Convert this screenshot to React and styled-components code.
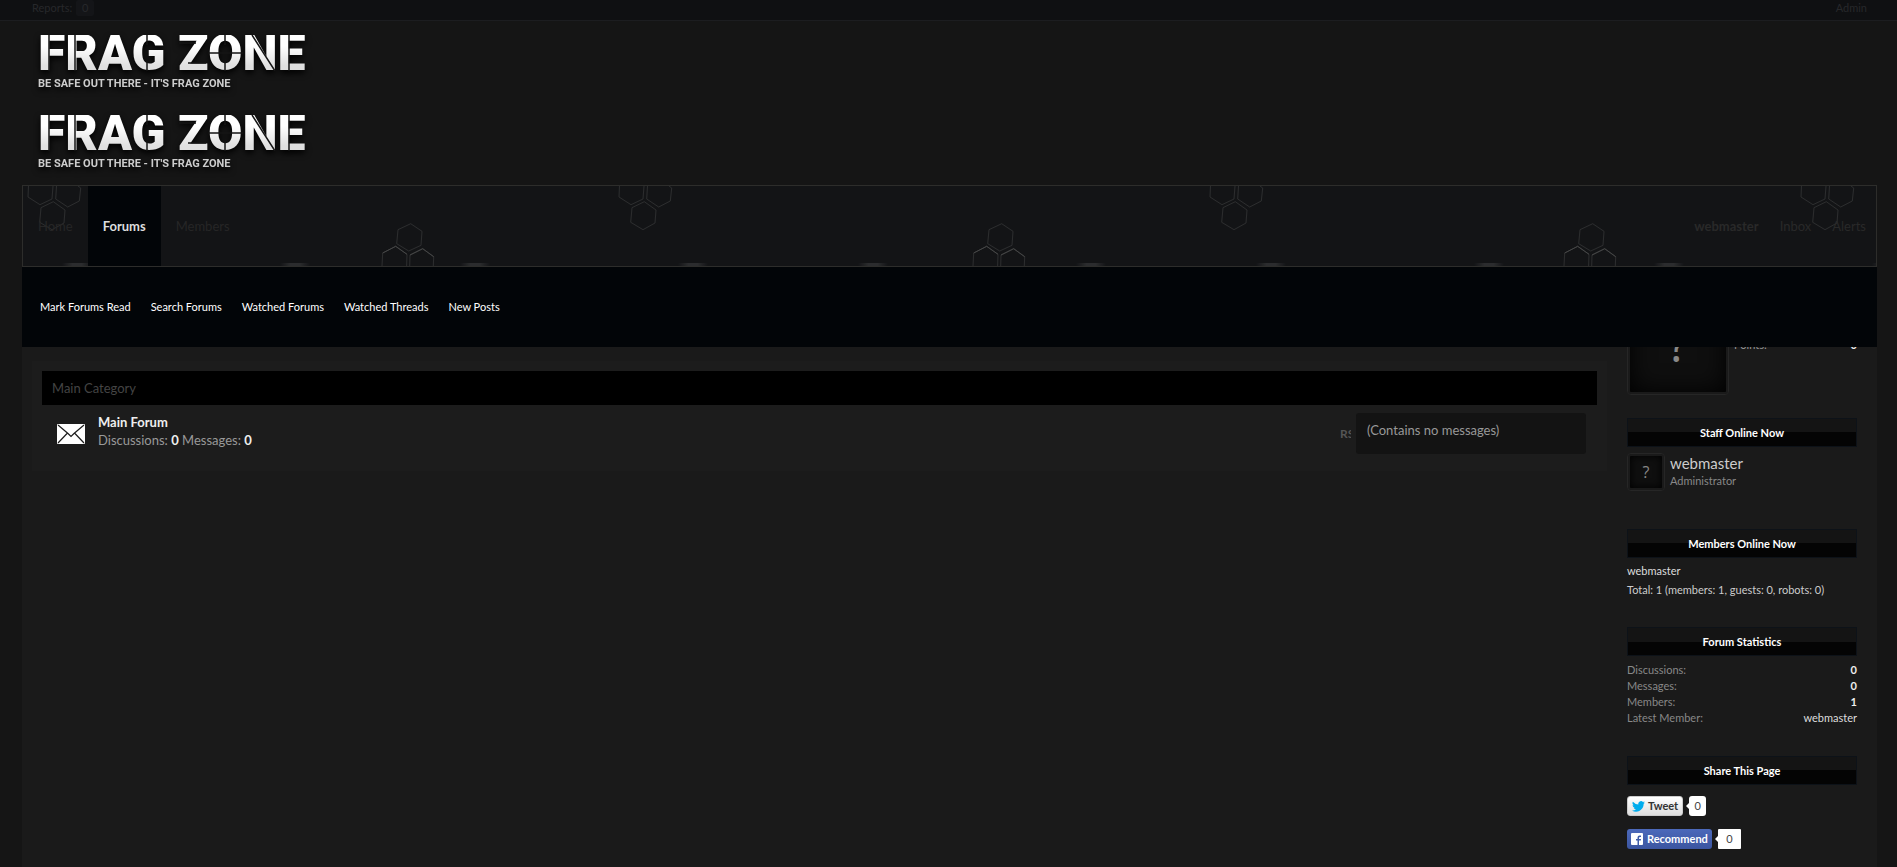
import React from 'react';
import styled, { createGlobalStyle } from 'styled-components';

const App = () => {
  return (
    <>
      <GlobalStyle />
      <Page>
        <ModeratorBar>
          <ModLink href="#reports">
            Reports: <ModCount>0</ModCount>
          </ModLink>
          <ModLink href="#admin">Admin</ModLink>
        </ModeratorBar>
        <Header>
          <Logo />
          <Logo />
        </Header>
        <Wrapper>
          <NavBar>
            <HexPattern />
            <NavGroup>
              <NavTab href="#home">Home</NavTab>
              <NavTab href="#forums" $active>
                Forums
              </NavTab>
              <NavTab href="#members">Members</NavTab>
            </NavGroup>
            <VisitorLinks>
              <VisitorLink href="#account" $strong>
                webmaster
              </VisitorLink>
              <VisitorLink href="#inbox">Inbox</VisitorLink>
              <VisitorLink href="#alerts">Alerts</VisitorLink>
            </VisitorLinks>
          </NavBar>
          <SubNav>
            {subLinks.map((label) => (
              <SubLink href="#links" key={label}>
                {label}
              </SubLink>
            ))}
          </SubNav>
          <Content>
            <ForumBlock>
              <CategoryTitle>Main Category</CategoryTitle>
              <Node>
                <EnvelopeIcon />
                <NodeInfo>
                  <NodeTitle href="#forum">Main Forum</NodeTitle>
                  <NodeStats>
                    Discussions: <b>0</b> Messages: <b>0</b>
                  </NodeStats>
                </NodeInfo>
                <RssLink href="#rss">RSS</RssLink>
                <LastPost>(Contains no messages)</LastPost>
              </Node>
            </ForumBlock>
            <Sidebar>
              <VisitorPanel>
                <Avatar $size={96}>?</Avatar>
                <VisitorStat>
                  <span>Points:</span>
                  <b>0</b>
                </VisitorStat>
              </VisitorPanel>
              <Section $height={111}>
                <SectionTitle>Staff Online Now</SectionTitle>
                <StaffRow>
                  <Avatar $size={32}>?</Avatar>
                  <div>
                    <StaffName href="#webmaster">webmaster</StaffName>
                    <StaffRole>Administrator</StaffRole>
                  </div>
                </StaffRow>
              </Section>
              <Section $height={98}>
                <SectionTitle>Members Online Now</SectionTitle>
                <OnlineList>
                  <SmallLink href="#webmaster">webmaster</SmallLink>
                  <p>Total: 1 (members: 1, guests: 0, robots: 0)</p>
                </OnlineList>
              </Section>
              <Section $height={129}>
                <SectionTitle>Forum Statistics</SectionTitle>
                <StatList>
                  {stats.map(([label, value]) => (
                    <StatRow key={label}>
                      <dt>{label}:</dt>
                      <dd>{value}</dd>
                    </StatRow>
                  ))}
                  <StatRow>
                    <dt>Latest Member:</dt>
                    <dd>
                      <SmallLink href="#webmaster">webmaster</SmallLink>
                    </dd>
                  </StatRow>
                </StatList>
              </Section>
              <Section $height={111}>
                <SectionTitle>Share This Page</SectionTitle>
                <ShareList>
                  <ShareRow>
                    <TweetButton type="button">
                      <TwitterIcon />
                      Tweet
                    </TweetButton>
                    <Bubble $width={17}>0</Bubble>
                  </ShareRow>
                  <ShareRow>
                    <RecommendButton type="button">
                      <FacebookIcon />
                      Recommend
                    </RecommendButton>
                    <Bubble $width={23} $square>
                      0
                    </Bubble>
                  </ShareRow>
                </ShareList>
              </Section>
            </Sidebar>
          </Content>
        </Wrapper>
      </Page>
    </>
  );
};

const subLinks = ['Mark Forums Read', 'Search Forums', 'Watched Forums', 'Watched Threads', 'New Posts'];

const stats = [
  ['Discussions', 0],
  ['Messages', 0],
  ['Members', 1],
];

const Logo = () => (
  <LogoLink href="#top">
    <LogoName>
      FRAG ZONE
      {/* stencil bridges cut through the letters */}
      <LogoCuts viewBox="0 0 268 36" width="268" height="36" aria-hidden="true">
        <path d="M11 0V36M37 0V36M109 0V10M109 26V36M187 0V10M187 26V36M170 18H205M141 8H158M150 28H168M214 0L237 36M251 0V36" />
      </LogoCuts>
    </LogoName>
    <LogoTagline>BE SAFE OUT THERE - IT&apos;S FRAG ZONE</LogoTagline>
  </LogoLink>
);

const HexPattern = () => (
  <PatternSvg aria-hidden="true">
    <defs>
      <pattern id="hexes" width="591" height="80" patternUnits="userSpaceOnUse">
        <g fill="none" stroke="#2c2d2e">
          <path d="M5.5 0L5 11L17 18.7L29 13L30 0M33.5 0L32.7 13L44.7 21L56.3 15L57.7 2L55 0" />
          <path d="M30.3 15.7L42 24L41 37L29 43.7L16.7 36.3L18 21.7Z" />
          <path d="M387.7 37.7L399 45.3L398 59.3L385.7 65L373.7 57.7L375 43.7Z" />
          <path d="M359 80L359.7 67L372.7 60.3L384 68.3L383.6 80" />
          <path d="M386.7 80L387 69L399.7 62.7L410.7 70.7L410.3 80" />
        </g>
        <path d="M359.7 67L372.7 60.3L384 68.3M387 69L399.7 62.7L410.7 70.7" fill="none" stroke="#454646" />
      </pattern>
      <linearGradient id="glow">
        <stop offset="0" stopColor="#2b2c2e" stopOpacity="0" />
        <stop offset="0.35" stopColor="#2b2c2e" />
        <stop offset="0.65" stopColor="#2b2c2e" />
        <stop offset="1" stopColor="#2b2c2e" stopOpacity="0" />
      </linearGradient>
      <pattern id="glows" width="398" height="80" patternUnits="userSpaceOnUse">
        <rect x="39" y="77" width="30" height="3" fill="url(#glow)" />
        <rect x="257" y="77" width="30" height="3" fill="url(#glow)" />
      </pattern>
    </defs>
    <rect width="100%" height="80" fill="url(#glows)" />
    <rect width="100%" height="80" fill="url(#hexes)" />
  </PatternSvg>
);

const EnvelopeIcon = () => (
  <svg width="28" height="20" viewBox="0 0 28 20" aria-hidden="true">
    <rect width="28" height="20" rx="1" fill="#fff" />
    <path d="M1 1L11 9.5L14 12.5L17 9.5L27 1M1 19L10.5 9M27 19L17.5 9" fill="none" stroke="#1c1c1c" strokeWidth="1.2" />
  </svg>
);

const TwitterIcon = () => (
  <svg width="13" height="11" viewBox="0 0 24 20" aria-hidden="true">
    <path
      fill="#00aced"
      d="M24 2.4a9.8 9.8 0 0 1-2.8.8A4.9 4.9 0 0 0 23.3.5a9.9 9.9 0 0 1-3.1 1.2 4.9 4.9 0 0 0-8.4 4.5A14 14 0 0 1 1.7 1a4.9 4.9 0 0 0 1.5 6.6A4.9 4.9 0 0 1 1 7v.1a4.9 4.9 0 0 0 3.9 4.8 4.9 4.9 0 0 1-2.2.1 4.9 4.9 0 0 0 4.6 3.4A9.9 9.9 0 0 1 0 17.4a13.9 13.9 0 0 0 7.5 2.2c9.1 0 14-7.5 14-14v-.7A10 10 0 0 0 24 2.4z"
    />
  </svg>
);

const FacebookIcon = () => (
  <svg width="12" height="12" viewBox="0 0 12 12" aria-hidden="true">
    <rect width="12" height="12" rx="1" fill="#fff" />
    <path d="M6.500 12V7.500H5V6h1.500V4.500Q6.500 2.500 8.500 2.500H10V4H9Q8 4 8 5V6H10L9.800 7.500H8V12Z" fill="#3f5ca8" />
  </svg>
);

const GlobalStyle = createGlobalStyle`
  * {
    box-sizing: border-box;
  }

  body {
    margin: 0;
    background: #151515;
    color: #ccc;
    font-family: 'Trebuchet MS', Lato, sans-serif;
    font-size: 12px;
  }

  a {
    color: inherit;
    text-decoration: none;
  }

  p,
  h2,
  h3,
  dl,
  dd {
    margin: 0;
  }
`;

const Page = styled.div`
  display: flex;
  flex-direction: column;
  min-height: 100vh;
`;

const ModeratorBar = styled.div`
  display: flex;
  justify-content: space-between;
  height: 21px;
  padding: 0 30px 0 32px;
  background: #0f1012;
  border-bottom: 1px solid #1c1d20;
  color: #27282b;
  font-size: 11px;
  line-height: 16px;
`;

const ModLink = styled.a`
  display: flex;
  gap: 4px;
`;

const ModCount = styled.span`
  width: 18px;
  height: 16px;
  border-radius: 2px;
  background: #141518;
  text-align: center;
`;

const Header = styled.header`
  padding: 0 38px 4px;
`;

const LogoLink = styled.a`
  display: block;
  width: 268px;
  height: 80px;
  padding-top: 14px;
  filter: drop-shadow(0 3px 3px #000);
`;

const LogoName = styled.span`
  display: block;
  position: relative;
  height: 36px;
  background: linear-gradient(#fff 30%, #e0e0e0 85%);
  background-clip: text;
  color: transparent;
  font-family: Roboto, sans-serif;
  font-size: 50px;
  font-weight: 900;
  line-height: 36px;
  white-space: nowrap;
`;

const LogoCuts = styled.svg`
  position: absolute;
  top: 0;
  left: 0;
  fill: none;
  stroke: #151515;
  stroke-width: 1.5;
`;

const LogoTagline = styled.span`
  display: block;
  margin-top: 5px;
  color: #ccc;
  font-family: Roboto, sans-serif;
  font-size: 11px;
  font-weight: bold;
  line-height: 16px;
  white-space: nowrap;
`;

const Wrapper = styled.div`
  display: flex;
  flex: 1;
  flex-direction: column;
  margin: 0 20px 0 22px;
  background: #1a1a1a;
`;

const NavBar = styled.nav`
  display: flex;
  position: relative;
  justify-content: space-between;
  height: 82px;
  border: 1px solid #2d2d2b;
  background: #131416;
  font-size: 13px;
`;

const PatternSvg = styled.svg`
  position: absolute;
  inset: 0;
  width: 100%;
  height: 80px;
`;

const NavGroup = styled.div`
  display: flex;
  position: relative;
`;

const NavTab = styled.a`
  padding: 0 15px;
  background: ${({ $active }) => ($active ? '#020508' : 'transparent')};
  color: ${({ $active }) => ($active ? '#ddd' : '#262626')};
  font-weight: ${({ $active }) => ($active ? 'bold' : 'normal')};
  line-height: 80px;
`;

const VisitorLinks = styled.div`
  display: flex;
  position: relative;
  gap: 21px;
  padding-right: 10px;
  line-height: 80px;
`;

const VisitorLink = styled.a`
  color: #292929;
  font-weight: ${({ $strong }) => ($strong ? 'bold' : 'normal')};
`;

const SubNav = styled.nav`
  display: flex;
  gap: 20px;
  height: 80px;
  padding-left: 18px;
  background: #020508;
  line-height: 80px;
`;

const SubLink = styled.a`
  color: #fff;
  font-size: 11px;
`;

const Content = styled.main`
  display: flex;
  align-items: flex-start;
  gap: 20px;
  padding: 0 20px 0 10px;
`;

const ForumBlock = styled.section`
  flex: 1;
  height: 110px;
  margin-top: 14px;
  padding: 10px;
  background: #1c1c1c;
`;

const CategoryTitle = styled.h2`
  height: 34px;
  padding-left: 10px;
  background: #000;
  color: #444;
  font-size: 13px;
  font-weight: normal;
  line-height: 34px;
`;

const Node = styled.div`
  display: flex;
  align-items: center;
  padding: 8px 11px 0 15px;
`;

const NodeInfo = styled.div`
  flex: 1;
  align-self: flex-start;
  margin-left: 13px;
  font-size: 13px;
  line-height: 18px;
`;

const NodeTitle = styled.a`
  color: #eee;
  font-weight: bold;
`;

const NodeStats = styled.p`
  color: #999;

  b {
    color: #eee;
  }
`;

const RssLink = styled.a`
  width: 11px;
  margin-right: 5px;
  overflow: hidden;
  color: #555;
  font-weight: bold;
`;

const LastPost = styled.p`
  width: 230px;
  height: 41px;
  padding: 8px 11px;
  border-radius: 3px;
  background: #131313;
  color: #999;
  font-size: 13px;
  line-height: 18px;
`;

const Sidebar = styled.aside`
  width: 230px;
  font-size: 11px;
  line-height: 16px;
`;

/* only the bottom of the card shows under the navigation */
const VisitorPanel = styled.div`
  display: flex;
  align-items: flex-end;
  gap: 5px;
  height: 48px;
  margin-bottom: 23px;
  overflow: hidden;
`;

const VisitorStat = styled.div`
  display: flex;
  flex: 1;
  justify-content: space-between;
  height: 58px;
  color: #999;

  b {
    color: #eee;
  }
`;

const Avatar = styled.span`
  display: block;
  flex-shrink: 0;
  width: ${({ $size }) => $size + 6}px;
  height: ${({ $size }) => $size + 6}px;
  border: 1px solid #262626;
  border-radius: 4px;
  background: #0f0f0f;
  box-shadow:
    inset 0 0 0 2px #1a1a1a,
    inset 0 0 ${({ $size }) => $size / 4}px 2px #000;
  color: #888;
  font-family: 'Open Sans', sans-serif;
  font-size: ${({ $size }) => $size / 2}px;
  line-height: ${({ $size }) => $size + 4}px;
  text-align: center;
`;

const Section = styled.section`
  min-height: ${({ $height }) => $height}px;
`;

const SectionTitle = styled.h3`
  height: 29px;
  border: 1px solid #0d1218;
  background: linear-gradient(#141414 50%, #040404 50%);
  color: #fff;
  font-size: 11px;
  font-weight: bold;
  line-height: 27px;
  text-align: center;
`;

const StaffRow = styled.div`
  display: flex;
  gap: 5px;
  margin-top: 6px;
`;

const StaffName = styled.a`
  display: block;
  color: #ccc;
  font-size: 15px;
  line-height: 20px;
`;

const StaffRole = styled.p`
  color: #888;
`;

const SmallLink = styled.a`
  color: #ddd;
`;

const OnlineList = styled.div`
  padding-top: 3px;
  line-height: 19px;
`;

const StatList = styled.dl`
  padding-top: 6px;
`;

const StatRow = styled.div`
  display: flex;
  justify-content: space-between;
  color: #888;

  dd {
    color: #eee;
    font-weight: bold;
  }

  a {
    font-weight: normal;
  }
`;

const ShareList = styled.div`
  display: flex;
  flex-direction: column;
  gap: 13px;
  margin-top: 11px;
`;

const ShareRow = styled.div`
  display: flex;
  gap: 6px;
`;

const ShareButton = styled.button`
  display: flex;
  align-items: center;
  height: 20px;
  padding: 0 4px;
  border-radius: 3px;
  font-family: inherit;
  font-size: 11px;
  font-weight: bold;
  line-height: 18px;
`;

const TweetButton = styled(ShareButton)`
  gap: 3px;
  border: 1px solid #ccc;
  background: linear-gradient(#fff, #dedede);
  color: #333;
`;

const RecommendButton = styled(ShareButton)`
  gap: 4px;
  border: 0;
  background: linear-gradient(#4c69ba, #3b55a0);
  color: #fff;
`;

const Bubble = styled.span`
  position: relative;
  width: ${({ $width }) => $width}px;
  height: 20px;
  border-radius: ${({ $square }) => ($square ? 1 : 3)}px;
  background: #fff;
  color: #444;
  line-height: 20px;
  text-align: center;

  &::before {
    content: '';
    position: absolute;
    top: 7px;
    left: -3px;
    border: 3px solid transparent;
    border-left: 0;
    border-right-color: #fff;
  }
`;

export default App;
